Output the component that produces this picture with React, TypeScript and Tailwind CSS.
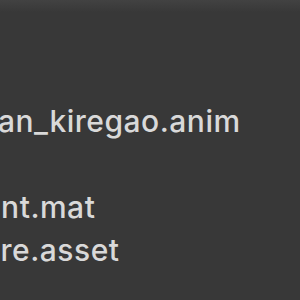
export default function App() {
  return (
    <div
      className="w-[300px] h-[300px] overflow-hidden bg-[#383838] text-[#d9d9d9] flex flex-col"
      style={{ fontFamily: "Inter, 'Noto Sans', sans-serif" }}
    >
      {/* top shade */}
      <div className="h-[12px] bg-gradient-to-b from-[#424242] to-[#383838]" />

      <div className="flex flex-col pt-[88px] text-[30px] font-medium leading-[43px] tracking-[0.5px] whitespace-nowrap">
        <div className="-ml-[2px]">an_kiregao.anim</div>
        <div className="h-[43px]" />
        <div className="-ml-[17px]">ent.mat</div>
        <div className="-ml-[18px]">ure.asset</div>
      </div>
    </div>
  );
}
